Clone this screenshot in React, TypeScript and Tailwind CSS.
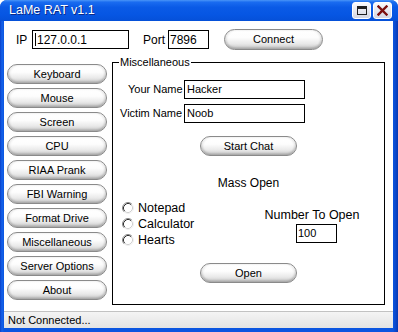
import React from "react";

function Btn({ children, className }: { children: React.ReactNode; className: string }) {
  return (
    <div
      className={`flex items-center justify-center rounded-full border border-[#8a8a8a] bg-[linear-gradient(to_bottom,#ffffff_0%,#fdfdfd_40%,#e9e9e9_72%,#c8c8c8_100%)] shadow-[inset_0_-2px_2px_rgba(0,0,0,0.12),inset_2px_0_2px_rgba(0,0,0,0.08),inset_-2px_0_2px_rgba(0,0,0,0.08)] text-[11px] leading-none text-black ${className}`}
    >
      {children}
    </div>
  );
}

function Radio() {
  return (
    <svg width="12" height="12" viewBox="0 0 12 12" className="shrink-0">
      <circle cx="6" cy="6" r="5.5" fill="#fff" />
      <path d="M2.11 9.89 A5.5 5.5 0 0 1 9.89 2.11" stroke="#8a8a8a" strokeWidth="1" fill="none" />
      <path d="M2.82 9.18 A4.5 4.5 0 0 1 9.18 2.82" stroke="#2e2e2e" strokeWidth="1" fill="none" />
      <path d="M9.89 2.11 A5.5 5.5 0 0 1 2.11 9.89" stroke="#f0f0f0" strokeWidth="1" fill="none" />
      <path d="M9.18 2.82 A4.5 4.5 0 0 1 2.82 9.18" stroke="#cfcfcf" strokeWidth="1" fill="none" />
    </svg>
  );
}

const sideButtons = [
  "Keyboard",
  "Mouse",
  "Screen",
  "CPU",
  "RIAA Prank",
  "FBI Warning",
  "Format Drive",
  "Miscellaneous",
  "Server Options",
  "About",
];

export default function App() {
  return (
    <div className="w-[398px] h-[332px] flex flex-col rounded-t-[7px] overflow-hidden bg-[linear-gradient(to_right,#0a3fc8_0px,#1462ea_2px,#0b55e0_4px,#0b55e0_393px,#0a45c8_396px,#0838b0_398px)] font-['Liberation_Sans',Arial,sans-serif] text-black">
      {/* Title bar */}
      <div className="h-[21px] shrink-0 flex items-center pl-[9px] pr-[6px] bg-[linear-gradient(to_bottom,#4a95f7_0%,#1a6cf0_10%,#0a5ae6_35%,#0656e3_70%,#0550d8_100%)]">
        <span className="text-white text-[12.5px] leading-none [text-shadow:1px_1px_0_#0b2a86]">LaMe RAT v1.1</span>
        <div className="ml-auto flex gap-[2px]">
          <div className="w-[19px] h-[17px] rounded-[3px] border border-white bg-[linear-gradient(to_bottom,#fafafc,#d3d6e2)] flex items-center justify-center">
            <div className="w-[10px] h-[9px] border border-[#202020] border-t-[3px]" />
          </div>
          <div className="w-[19px] h-[17px] rounded-[3px] border border-white bg-[linear-gradient(to_bottom,#fafafc,#d3d6e2)] flex items-center justify-center">
            <svg width="11" height="11" viewBox="0 0 11 11">
              <path d="M1.5 1.5 L9.5 9.5 M9.5 1.5 L1.5 9.5" stroke="#7c0f0f" strokeWidth="2.4" strokeLinecap="square" />
            </svg>
          </div>
        </div>
      </div>

      {/* Client */}
      <div className="flex-1 ml-[4px] mr-[5px] mb-[4px] bg-white flex flex-col">
        {/* Top row */}
        <div className="flex items-center mt-[8px] h-[21px] pl-[12px] text-[12px]">
          <span className="w-[16px]">IP</span>
          <div className="w-[97px] h-[19px] border border-black flex items-center pl-[2px]">
            <span className="w-px h-[13px] bg-black mr-[1px]" />
            127.0.0.1
          </div>
          <span className="ml-[14px] w-[25px]">Port</span>
          <div className="w-[41px] h-[19px] border border-black flex items-center pl-[1px]">7896</div>
          <Btn className="ml-[15px] w-[99px] h-[21px]">Connect</Btn>
        </div>

        {/* Main */}
        <div className="flex mt-[12px] pl-[3px]">
          <div className="flex flex-col gap-[4px] w-[100px] mt-[2px]">
            {sideButtons.map((b) => (
              <Btn key={b} className="w-[100px] h-[20px]">
                {b}
              </Btn>
            ))}
          </div>

          <div className="relative ml-[5px] w-[273px] h-[243px] border border-black flex flex-col">
            <span className="absolute left-[6px] top-[-8px] bg-white px-[1px] text-[11px] leading-[14px]">
              Miscellaneous
            </span>

            <div className="flex items-center mt-[17px] h-[19px] text-[11px]">
              <div className="w-[71px] pl-[15px]">Your Name</div>
              <div className="w-[121px] h-[19px] border border-black flex items-center pl-[2px]">Hacker</div>
            </div>
            <div className="flex items-center mt-[5px] h-[19px] text-[11px]">
              <div className="w-[71px] pl-[7px]">Victim Name</div>
              <div className="w-[121px] h-[19px] border border-black flex items-center pl-[2px]">Noob</div>
            </div>

            <Btn className="self-center mt-[13px] w-[97px] h-[20px]">Start Chat</Btn>

            <div className="mt-[20px] h-[14px] leading-[14px] text-[12px] text-center">Mass Open</div>

            <div className="flex mt-[10px]">
              <div className="w-[140px] flex flex-col pl-[9px] text-[12.5px]">
                {["Notepad", "Calculator", "Hearts"].map((r) => (
                  <div key={r} className="h-[16px] flex items-center gap-[4px]">
                    <Radio />
                    <span>{r}</span>
                  </div>
                ))}
              </div>
              <div className="w-[118px] flex flex-col items-center">
                <div className="mt-[8px] h-[14px] leading-[14px] text-[12.5px] whitespace-nowrap">Number To Open</div>
                <div className="mt-[2px] ml-[9px] w-[41px] h-[19px] border border-black flex items-center pl-[1px] text-[11px]">
                  100
                </div>
              </div>
            </div>

            <Btn className="self-center mt-[15px] w-[97px] h-[20px]">Open</Btn>
          </div>
        </div>

        {/* Status bar */}
        <div className="mt-auto h-[17px] border-t border-[#c2c2c2] bg-[linear-gradient(to_bottom,#f4f4f4,#e3e3e3)] flex items-center pl-[4px] text-[11px]">
          Not Connected...
        </div>
      </div>
    </div>
  );
}
